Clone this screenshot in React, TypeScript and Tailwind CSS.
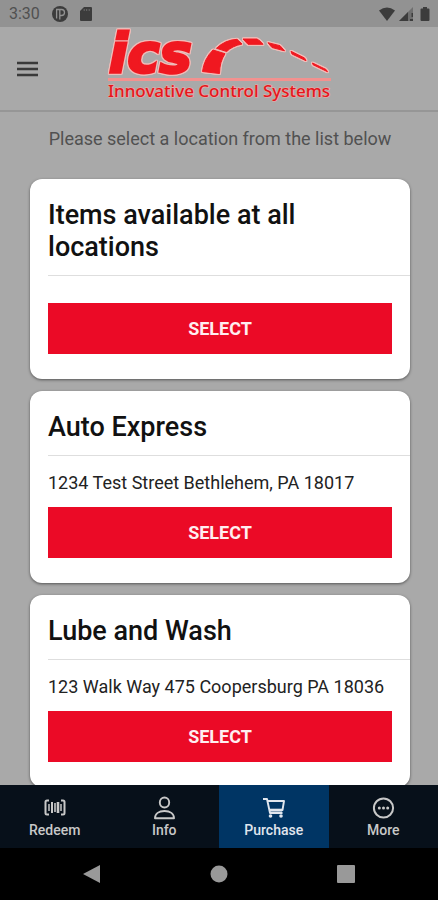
import type { ReactNode } from "react";

interface Location {
  name: string;
  address?: string;
}

interface Tab {
  label: string;
  icon: ReactNode;
  active?: boolean;
}

const locations: Location[] = [
  { name: "Items available at all locations" },
  { name: "Auto Express", address: "1234 Test Street Bethlehem, PA 18017" },
  { name: "Lube and Wash", address: "123 Walk Way 475 Coopersburg PA 18036" },
];

const tabs: Tab[] = [
  { label: "Redeem", icon: <RedeemIcon /> },
  { label: "Info", icon: <PersonIcon /> },
  { label: "Purchase", icon: <CartIcon />, active: true },
  { label: "More", icon: <MoreIcon /> },
];

function RedeemIcon() {
  return (
    <svg viewBox="0 0 24 24" className="w-6 h-6" fill="none" stroke="currentColor" strokeWidth="2" aria-hidden="true">
      <path d="M6 4.500H4A1.500 1.500 0 0 0 2.500 6V17A1.500 1.500 0 0 0 4 18.500H6M18 4.500H20A1.500 1.500 0 0 1 21.500 6V17A1.500 1.500 0 0 1 20 18.500H18" />
      <path d="M6 8V15M18 8V15" strokeWidth="1.500" />
      <path d="M9 6V17" strokeWidth="2" />
      <path d="M12 7V16" strokeWidth="1.600" />
      <path d="M15 6V17" strokeWidth="2.600" />
    </svg>
  );
}

function PersonIcon() {
  return (
    <svg viewBox="0 0 24 24" className="w-6 h-6" fill="none" stroke="currentColor" strokeWidth="1.9" strokeLinejoin="round" aria-hidden="true">
      <ellipse cx="12.500" cy="6.500" rx="4.700" ry="5" />
      <path d="M3 22.300C3 17.800 6.800 15 12.500 15S22 17.800 22 22.300Z" />
    </svg>
  );
}

function CartIcon() {
  return (
    <svg viewBox="0 0 24 24" className="w-6 h-6" fill="none" stroke="currentColor" strokeWidth="1.9" strokeLinejoin="round" aria-hidden="true">
      <path d="M1 3H5L8 17H20.500" />
      <path d="M5.500 5H22L20.500 14H7.500" />
      <path d="M7 12.500H20.500L20 17H8Z" fill="currentColor" fillOpacity="0.6" stroke="none" />
      <circle cx="8.500" cy="20" r="1.800" fill="currentColor" stroke="none" />
      <circle cx="19" cy="20" r="1.800" fill="currentColor" stroke="none" />
    </svg>
  );
}

function MoreIcon() {
  return (
    <svg viewBox="0 0 24 24" className="w-6 h-6" fill="none" stroke="currentColor" strokeWidth="2" aria-hidden="true">
      <circle cx="12.500" cy="12" r="9.600" />
      <g fill="currentColor" stroke="none">
        <circle cx="8.300" cy="12" r="1.500" />
        <circle cx="12.500" cy="12" r="1.500" />
        <circle cx="16.700" cy="12" r="1.500" />
      </g>
    </svg>
  );
}

function Logo() {
  return (
    <svg viewBox="0 0 228 78" className="w-[228px] h-[78px] overflow-visible" role="img" aria-label="ics Innovative Control Systems">
      <g
        fill="#f01820"
        stroke="#f01820"
        className="[filter:drop-shadow(1px_0_0_#efbcb8)_drop-shadow(-1px_0_0_#efbcb8)_drop-shadow(0_1px_0_#efbcb8)_drop-shadow(0_-1px_0_#efbcb8)]"
      >
        <text
          x="4"
          y="45"
          strokeWidth="3"
          fontFamily="'DejaVu Sans', sans-serif"
          fontSize="54"
          fontWeight="700"
          fontStyle="italic"
        >
          ics
        </text>
        <path d="M97.500 44.500Q99 32 108 23L120 26.700Q114.500 35 114.500 46.500Z" />
        <path d="M111.500 21.300Q120 13 132 12.300L137 17Q127 19 121.700 24.500Z" />
        <path d="M138 12H152Q155 13.500 158 17.300H143Z" />
        <path d="M163 15.700L175 18.700L179.500 23.800L167 20.500Z" />
        <path d="M186 24.300L199.500 31L201 33.700L187 27Z" />
        <path d="M207.500 36L221 42.500L222.500 44.700L208 37.700Z" />
      </g>
      <path d="M3 52.500H226" stroke="#f3918f" strokeWidth="3" />
      <text
        x="3"
        y="70"
        fill="#e4161c"
        stroke="#f0aaa6"
        strokeWidth="1.200"
        style={{ paintOrder: "stroke" }}
        fontFamily="'Noto Sans', sans-serif"
        fontSize="17"
        fontWeight="500"
      >
        Innovative Control Systems
      </text>
    </svg>
  );
}

function StatusBar() {
  return (
    <div className="flex h-[27px] shrink-0 items-center justify-between bg-[#929292] pt-px pl-[9px] pr-[5px] text-[#3c3c3c]">
      <div className="flex items-center gap-3">
        <span className="text-base text-[#505050]">3:30</span>
        <svg viewBox="0 0 16 16" className="w-4 h-4" aria-hidden="true">
          <circle cx="8" cy="8" r="8" fill="currentColor" />
          <path d="M4 3.500H9.500A2.500 2.500 0 0 1 9.500 9.500H7.800V13.500M4.600 4V12.500M7.800 4V9" fill="none" stroke="#929292" strokeWidth="1.300" />
        </svg>
        <svg viewBox="0 0 12 14" className="w-3 h-3.5" aria-hidden="true">
          <path d="M4 0H11A1 1 0 0 1 12 1V13A1 1 0 0 1 11 14H1A1 1 0 0 1 0 13V4Z" fill="currentColor" />
          <path d="M4.200 2V4M6.700 2V4M9.200 2V4" stroke="#6c6c6c" />
        </svg>
      </div>
      <div className="flex items-center gap-1">
        <svg viewBox="0 0 16 14" className="w-4 h-3.5" fill="currentColor" aria-hidden="true">
          <path d="M0 3.500Q8 -2.500 16 3.500L8 14Z" />
        </svg>
        <svg viewBox="0 0 14 14" className="w-3.5 h-3.5" fill="currentColor" aria-hidden="true">
          <path d="M0 14L14 0V14Z" fillOpacity="0.4" />
          <path d="M0 14L9 5V14ZM11 12H14V14H11ZM12.500 6H14V10H12.500Z" />
        </svg>
        <svg viewBox="0 0 16 14" className="w-4 h-3.5" fill="currentColor" aria-hidden="true">
          <path d="M6 0H10V1.500H11.500A1 1 0 0 1 12.500 2.500V13A1 1 0 0 1 11.500 14H4.500A1 1 0 0 1 3.500 13V2.500A1 1 0 0 1 4.500 1.500H6Z" />
        </svg>
      </div>
    </div>
  );
}

function LocationCard({ name, address }: Location) {
  return (
    <li className="rounded-xl bg-white pb-[25px] pl-[18px] shadow-[0_1px_3px_rgba(0,0,0,0.5)]">
      <h2 className="border-b border-[#dedede] pt-5 pr-[18px] pb-3 text-[27px] leading-8 font-medium text-[#111]">{name}</h2>
      <div className="pt-[15px] pr-[18px]">
        {address && <p className="text-lg leading-6 whitespace-nowrap text-[#222]">{address}</p>}
        <button type="button" className="mt-3 h-[51px] w-full bg-[#eb0a26] text-lg font-bold text-[#ffeef0]">
          SELECT
        </button>
      </div>
    </li>
  );
}

export default function App() {
  return (
    <div className="flex h-screen flex-col bg-[#a9a9a9] font-[Roboto,sans-serif]">
      <StatusBar />

      <header className="grid h-[85px] shrink-0 grid-cols-[1fr_auto_1fr] items-start border-b-2 border-[#969696]">
        <button type="button" aria-label="Menu" className="flex w-14 h-[84px] items-center pl-[17px] text-[#3a3a3a]">
          <svg viewBox="0 0 21 16" className="w-[21px] h-4" stroke="currentColor" strokeWidth="2.6" aria-hidden="true">
            <path d="M0 2H21M0 8H21M0 14H21" />
          </svg>
        </button>
        <Logo />
      </header>

      <main className="min-h-0 flex-1 overflow-hidden pr-7 pl-[30px]">
        <p className="pt-[15px] pb-7 text-center text-lg leading-6 text-[#515151]">Please select a location from the list below</p>
        <ul className="flex flex-col gap-3">
          {locations.map((location) => (
            <LocationCard key={location.name} {...location} />
          ))}
        </ul>
      </main>

      <nav className="grid h-[63px] shrink-0 grid-cols-4 bg-[#07101a]">
        {tabs.map(({ label, icon, active }) => (
          <a
            key={label}
            href="#"
            aria-current={active ? "page" : undefined}
            className={`flex flex-col items-center pt-[11px] text-sm leading-5 font-medium ${active ? "bg-[#003564] text-[#e0e6ee]" : "text-[#c8c8c8]"}`}
          >
            {icon}
            {label}
          </a>
        ))}
      </nav>

      {/* Android system buttons */}
      <div className="flex h-[52px] shrink-0 items-center justify-around bg-black px-7 text-[#999]">
        <button type="button" aria-label="Back">
          <svg viewBox="0 0 18 18" className="w-[18px] h-[18px]" fill="currentColor" aria-hidden="true">
            <path d="M17 0V18L0 9Z" />
          </svg>
        </button>
        <button type="button" aria-label="Home">
          <svg viewBox="0 0 18 18" className="w-[18px] h-[18px]" fill="currentColor" aria-hidden="true">
            <circle cx="9" cy="9" r="8.500" />
          </svg>
        </button>
        <button type="button" aria-label="Recent apps">
          <svg viewBox="0 0 18 18" className="w-[18px] h-[18px]" fill="currentColor" aria-hidden="true">
            <rect width="18" height="18" rx="1" />
          </svg>
        </button>
      </div>
    </div>
  );
}
